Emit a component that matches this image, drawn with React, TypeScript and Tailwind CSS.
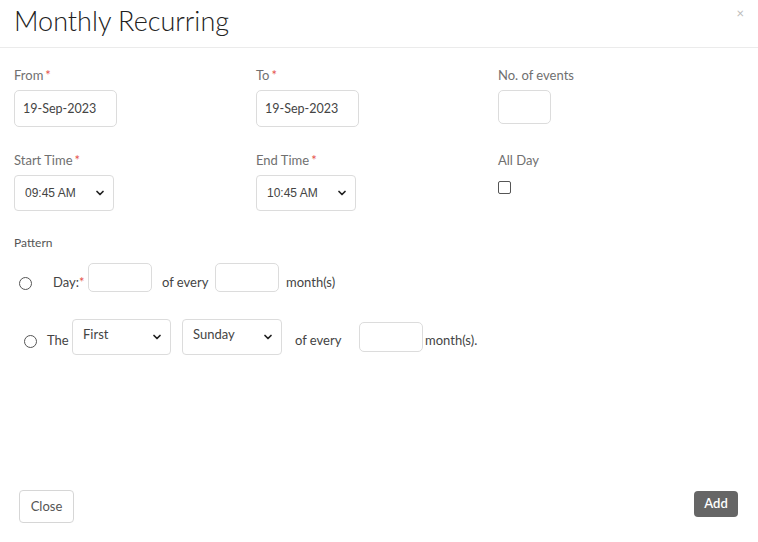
import { ChevronDown } from "lucide-react";

const font = { fontFamily: "Lato, 'Open Sans', sans-serif" };

function Req() {
  return <span className="ml-[2px] text-[#e5534b]">*</span>;
}

function Label({ children, req }: { children: React.ReactNode; req?: boolean }) {
  return (
    <p className="text-[13px] leading-[16px] text-[#707070]">
      {children}
      {req && <Req />}
    </p>
  );
}

function Select({ value, w, h, textClass }: { value: string; w: string; h: string; textClass: string }) {
  return (
    <div className={`relative ${w} ${h}`}>
      <select
        defaultValue={value}
        className={`h-full w-full appearance-none rounded-[4px] border border-[#dcdcdc] bg-white text-[#444] outline-none ${textClass}`}
      >
        <option>{value}</option>
      </select>
      <ChevronDown
        className="pointer-events-none absolute right-[8px] top-1/2 h-[12px] w-[12px] -translate-y-1/2 text-[#222]"
        strokeWidth={3.5}
      />
    </div>
  );
}

const dateInput =
  "mt-[7px] h-[37px] w-[103px] rounded-[5px] border border-[#dcdcdc] px-[8px] text-[12.5px] text-[#444] outline-none";

export default function App() {
  return (
    <div className="flex h-[542px] w-[758px] flex-col bg-white" style={font}>
      {/* header */}
      <div className="flex h-[48px] items-start justify-between border-b border-[#ebebeb] pl-[14px] pr-[14px]">
        <h1 className="pt-[4px] text-[27px] font-light leading-[34px] text-[#222]">Monthly Recurring</h1>
        <button type="button" className="pt-[5px] text-[13px] leading-[16px] text-[#bbb]">×</button>
      </div>

      {/* body */}
      <div className="flex-1 px-[14px] pt-[19px]">
        <div className="grid grid-cols-[242px_242px_1fr]">
          <div>
            <Label req>From</Label>
            <input readOnly value="19-Sep-2023" className={dateInput} />
          </div>
          <div>
            <Label req>To</Label>
            <input readOnly value="19-Sep-2023" className={dateInput} />
          </div>
          <div>
            <Label>No. of events</Label>
            <input className="mt-[7px] h-[34px] w-[53px] rounded-[5px] border border-[#dcdcdc] outline-none" />
          </div>
        </div>

        <div className="mt-[25px] grid grid-cols-[242px_242px_1fr]">
          <div>
            <Label req>Start Time</Label>
            <div className="mt-[7px]">
              <Select value="09:45 AM" w="w-[100px]" h="h-[36px]" textClass="pl-[10px] text-[12px] [font-family:Arial,'Liberation_Sans',sans-serif]" />
            </div>
          </div>
          <div>
            <Label req>End Time</Label>
            <div className="mt-[7px]">
              <Select value="10:45 AM" w="w-[100px]" h="h-[36px]" textClass="pl-[10px] text-[12px] [font-family:Arial,'Liberation_Sans',sans-serif]" />
            </div>
          </div>
          <div>
            <Label>All Day</Label>
            <div className="mt-[13px] h-[13px] w-[13px] rounded-[2px] border border-[#555]" />
          </div>
        </div>

        <p className="mt-[25px] text-[12px] leading-[14px] text-[#555]">Pattern</p>

        {/* Day row */}
        <div className="mt-[13px] flex items-center text-[13px] text-[#444]">
          <span className="ml-[5px] mt-[11px] h-[13px] w-[13px] shrink-0 rounded-full border border-[#555]" />
          <span className="ml-[21px] mt-[10px] w-[35px]">
            Day:<span className="text-[#e5534b]">*</span>
          </span>
          <input className="h-[29px] w-[64px] rounded-[5px] border border-[#dcdcdc] outline-none" />
          <span className="ml-[10px] mt-[10px] w-[53px]">of every</span>
          <input className="h-[29px] w-[64px] rounded-[5px] border border-[#dcdcdc] outline-none" />
          <span className="ml-[7px] mt-[10px]">month(s)</span>
        </div>

        {/* The row */}
        <div className="mt-[26px] flex items-center text-[13px] text-[#444]">
          <span className="ml-[10px] mt-[10px] h-[13px] w-[13px] shrink-0 rounded-full border border-[#555]" />
          <span className="ml-[10px] mt-[8px] w-[25px]">The</span>
          <Select value="First" w="w-[99px]" h="h-[36px]" textClass="pl-[10px] pb-[4px] text-[13px]" />
          <div className="ml-[11px]">
            <Select value="Sunday" w="w-[100px]" h="h-[36px]" textClass="pl-[10px] pb-[4px] text-[13px]" />
          </div>
          <span className="ml-[13px] mt-[8px] w-[64px]">of every</span>
          <input className="h-[30px] w-[64px] rounded-[5px] border border-[#dcdcdc] outline-none" />
          <span className="ml-[2px] mt-[8px]">month(s).</span>
        </div>
      </div>

      {/* footer */}
      <div className="flex items-start justify-between pb-[19px] pl-[19px] pr-[20px]">
        <button
          type="button"
          className="h-[33px] w-[55px] rounded-[4px] border border-[#d6d6d6] bg-white text-[13px] text-[#555]"
        >
          Close
        </button>
        <button
          type="button"
          className="mt-[1px] h-[26px] w-[44px] rounded-[4px] bg-[#666] text-[13px] font-semibold text-white"
        >
          Add
        </button>
      </div>
    </div>
  );
}
